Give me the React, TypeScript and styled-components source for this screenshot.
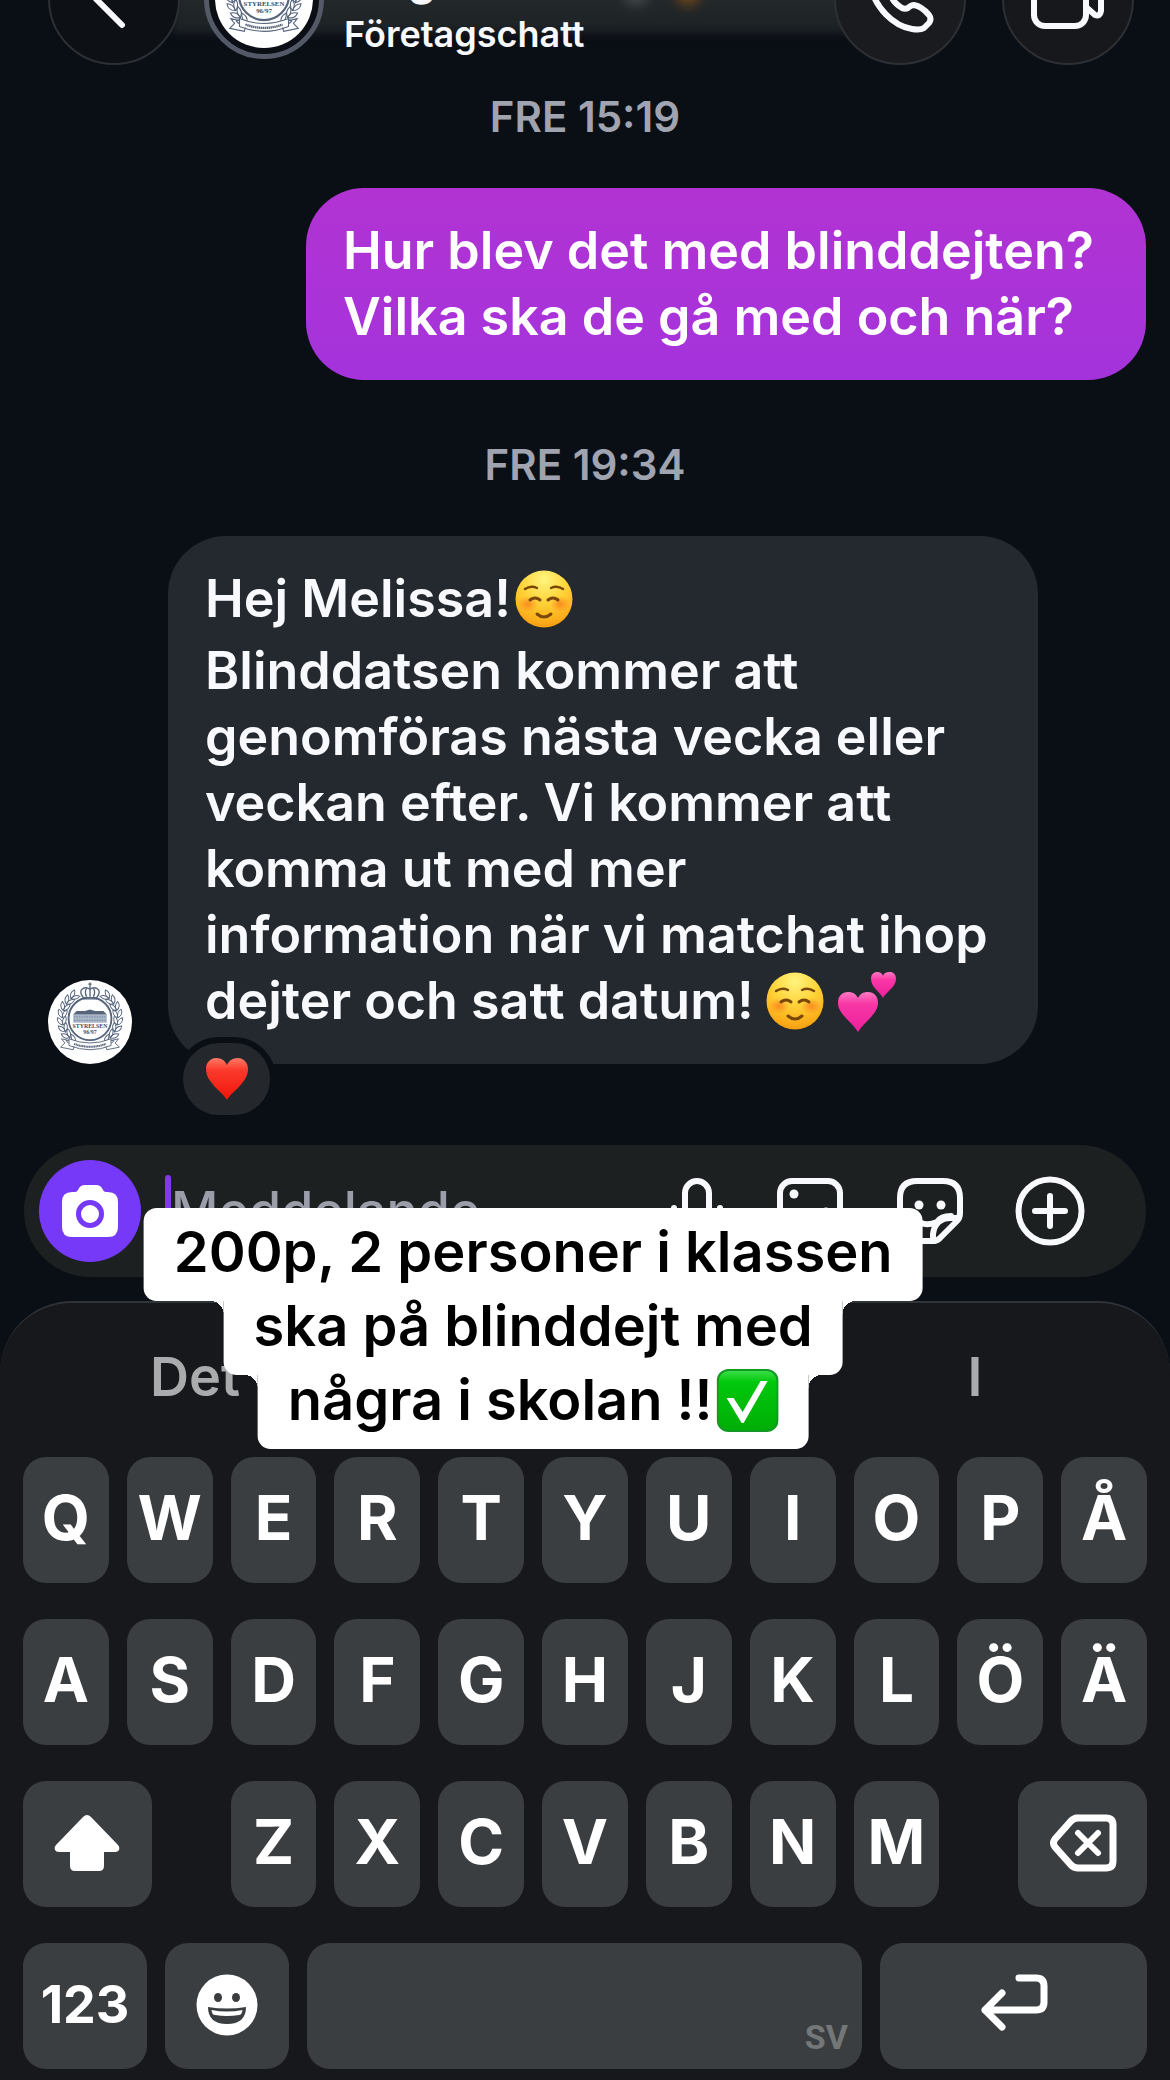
import React from "react";
import styled, { createGlobalStyle, css } from "styled-components";

const INK = "#56647c";

const GlobalStyle = createGlobalStyle`
  * { box-sizing: border-box; }
  html { background: #17181c; }
  body {
    margin: 0;
    font-family: Inter, "Liberation Sans", sans-serif;
    color: #f7f9fc;
    background: #0a0e15;
  }
  button {
    border: 0;
    padding: 0;
    margin: 0;
    font: inherit;
    color: inherit;
    background: none;
    cursor: pointer;
  }
  svg { display: block; }
`;

const Screen = styled.div`
  overflow: hidden;
  background: #0a0e15;
`;

const Header = styled.header`
  position: relative;
  display: flex;
  align-items: center;
  height: 132px;
  margin-top: -67px;
  padding: 0 36px 0 48px;

  &::before {
    content: "";
    position: absolute;
    left: 172px;
    right: 300px;
    top: 40px;
    height: 60px;
    background:
      radial-gradient(circle at 516px 20px, #7a4a14 4px, transparent 18px),
      radial-gradient(circle at 464px 20px, #4a4f52 4px, transparent 18px),
      linear-gradient(#262b2e, #1d2225);
    filter: blur(5px);
  }
`;

const RoundButton = styled.button<{ $tone: string }>`
  position: relative;
  flex: none;
  display: grid;
  place-items: center;
  width: 132px;
  height: 132px;
  border-radius: 50%;
  border: 2px solid #2c3035;
  background: ${(p) => p.$tone};
`;

const HeaderActions = styled.div`
  display: flex;
  gap: 36px;
`;

const HeaderAvatar = styled.div`
  position: relative;
  flex: none;
  width: 120px;
  height: 120px;
  margin: 0 20px 0 24px;
  padding: 6px;
  border: 5px solid #535966;
  border-radius: 50%;
  background: #0b0e14;
`;

const Titles = styled.div`
  position: relative;
  flex: 1;
  align-self: flex-end;
  padding-bottom: 10px;
`;

const Title = styled.h1`
  margin: 0 0 8px;
  padding-left: 64px;
  font-size: 44px;
  line-height: 52px;
  font-weight: 700;
`;

const Subtitle = styled.p`
  margin: 0;
  font-size: 36px;
  line-height: 42px;
  font-weight: 600;
`;

const Thread = styled.main`
  display: flex;
  flex-direction: column;
  padding: 28px 24px 81px 48px;
`;

const Stamp = styled.time<{ $spaced?: boolean }>`
  align-self: center;
  margin: ${(p) => (p.$spaced ? "61px" : "0")} 24px 47px 0;
  font-size: 42px;
  line-height: 48px;
  font-weight: 600;
  color: #a0a4b0;
`;

const Bubble = styled.div<{ $mine?: boolean }>`
  position: relative;
  padding: 30px 37px;
  border-radius: 58px;
  font-size: 52px;
  line-height: 66px;
  font-weight: 600;
  white-space: pre-line;
  ${(p) =>
    p.$mine
      ? css`
          align-self: flex-end;
          padding-right: 52px;
          color: #fff;
          background: linear-gradient(#b233d2, #a433dc);
        `
      : css`
          flex: 0 0 870px;
          background: #24282f;
        `}
`;

const Greeting = styled.div`
  display: flex;
  align-items: center;
  gap: 4px;
  height: 72px;
  padding-bottom: 6px;
`;

const Closing = styled.div`
  display: flex;
  align-items: center;
  gap: 12px;
`;

const Incoming = styled.div`
  display: flex;
  align-items: flex-end;
  gap: 36px;
`;

const SmallAvatar = styled.div`
  flex: none;
  width: 84px;
  height: 84px;
`;

const Reaction = styled.button`
  position: absolute;
  left: 9px;
  bottom: -57px;
  display: grid;
  place-items: center;
  width: 99px;
  height: 84px;
  border: 6px solid #0a0e15;
  border-radius: 42px;
  background: #24282c;
`;

const Dock = styled.div`
  position: relative;
`;

const Composer = styled.form`
  display: flex;
  align-items: center;
  height: 132px;
  margin: 0 24px 24px;
  padding: 0 61px 0 15px;
  border-radius: 66px;
  background: #1d2021;
`;

const CameraButton = styled.button`
  flex: none;
  display: grid;
  place-items: center;
  width: 102px;
  height: 102px;
  border-radius: 50%;
  background: #7639f8;
`;

const Field = styled.label`
  flex: 1;
  min-width: 0;
  display: flex;
  align-items: center;
  padding-left: 24px;
`;

const Caret = styled.span`
  flex: none;
  width: 6px;
  height: 72px;
  border-radius: 3px;
  background: #8338ec;
`;

const MessageInput = styled.input`
  flex: 1;
  min-width: 0;
  padding: 0;
  border: 0;
  outline: 0;
  background: none;
  font: inherit;
  font-size: 52px;
  font-weight: 500;
  line-height: 66px;
  color: #f7f9fc;
  &::placeholder {
    color: #9b9da9;
    opacity: 1;
  }
`;

const Tools = styled.div`
  flex: none;
  display: flex;
  align-items: center;
  gap: 50px;
`;

const Caption = styled.div`
  position: absolute;
  top: 63px;
  left: 46%;
  transform: translateX(-50%);
  width: max-content;
  margin-left: -5px;
  display: flex;
  flex-direction: column;
  align-items: center;
  color: #000;
  font-size: 56px;
  line-height: 74px;
  font-weight: 600;
`;

const CaptionLine = styled.div`
  position: relative;
  display: flex;
  align-items: center;
  gap: 4px;
  padding: 7px 30px 12px;
  border-radius: 13px;
  background: #fff;

  & + & {
    margin-top: -19px;
  }
  & + &::before,
  & + &::after {
    content: "";
    position: absolute;
    top: 19px;
    width: 13px;
    height: 13px;
  }
  & + &::before {
    right: 100%;
    background: radial-gradient(circle at 0 100%, transparent 13px, #fff 13px);
  }
  & + &::after {
    left: 100%;
    background: radial-gradient(circle at 100% 100%, transparent 13px, #fff 13px);
  }
`;

const CaptionText = styled.span`
  position: relative;
  z-index: 1;
`;

const Keyboard = styled.section`
  padding: 0 23px 11px;
  border-top: 2px solid #303338;
  border-radius: 72px 72px 0 0;
  background: #17181c;
`;

const Suggestions = styled.div`
  display: grid;
  grid-template-columns: repeat(3, 1fr);
  height: 154px;
  margin: 0 -23px;
  padding-bottom: 8px;
`;

const Suggestion = styled.button`
  font-size: 54px;
  font-weight: 600;
  color: #a9abad;
`;

const Rows = styled.div`
  display: grid;
  gap: 36px;
`;

const Row = styled.div<{ $columns?: string }>`
  display: grid;
  grid-template-columns: ${(p) => p.$columns ?? "repeat(11, minmax(0, 1fr))"};
  gap: 18px;
`;

const Key = styled.button<{ $edge?: "start" | "end" }>`
  display: flex;
  align-items: center;
  justify-content: center;
  height: 126px;
  padding-bottom: 6px;
  border-radius: 23px;
  background: #3b3e40;
  color: #fff;
  font-size: 62px;
  font-weight: 700;
  ${(p) =>
    p.$edge &&
    css`
      grid-column: span 2;
      width: 68%;
      justify-self: ${p.$edge};
    `}
`;

const IconKey = styled(Key)`
  padding-bottom: 2px;
`;

const NumbersKey = styled(Key)`
  padding-bottom: 4px;
  font-size: 52px;
`;

const SpaceKey = styled(Key)`
  align-items: flex-end;
  justify-content: flex-end;
  padding: 0 14px 10px;
  font-family: Roboto, sans-serif;
  font-size: 34px;
  line-height: 44px;
  font-weight: 700;
  color: #747778;
`;

function Emblem() {
  const leaves = Array.from({ length: 8 }, (_, i) => {
    const deg = 130 + i * 15;
    const a = (deg * Math.PI) / 180;
    return { x: 50 + 33 * Math.cos(a), y: 46 - 33 * Math.sin(a), r: 180 - deg };
  });
  const branch = leaves.map((l, i) => (
    <g key={i} transform={`translate(${l.x} ${l.y}) rotate(${l.r})`}>
      <path d="M0 2Q-7-1-5-8Q1-5 0 2Z" />
      <path d="M0 2Q6-1 5-8Q-1-5 0 2Z" />
    </g>
  ));
  return (
    <svg viewBox="0 0 100 100" width="100%" height="100%" role="img" aria-label="Styrelsen 96/97">
      <circle cx="50" cy="50" r="50" fill="#fff" />
      <g fill="none" stroke={INK} strokeWidth="1.1">
        <g>{branch}</g>
        <g transform="translate(100 0) scale(-1 1)">{branch}</g>
        <circle cx="50" cy="46" r="25.500" fill="#fff" strokeWidth="2.2" />
        <path d="M42 21Q36 13 42 10Q46 8 50 11Q54 8 58 10Q64 13 58 21Z" fill="#fff" strokeWidth="1.6" />
        <path d="M46 20Q43 14 46 10M50 20V10M54 20Q57 14 54 10M41 22.500H59M50 3V10M48 5H52" strokeWidth="1.6" />
        <path d="M25 70Q50 80 75 70V78Q50 88 25 78Z" fill="#fff" />
        <path d="M25 72L16 70L20 75L15 80L30 83L31 79M75 72L84 70L80 75L85 80L70 83L69 79" />
        <path d="M31 76Q50 83 69 76" strokeWidth="2.400" strokeDasharray="1.500 .5" />
      </g>
      <path d="M30 41H70V51H30Z" fill="#a9b6c8" />
      <path d="M30 41L34 37H44L50 35L56 37H66L70 41Z" fill={INK} />
      <path d="M31 44H69M31 48H69" stroke="#7c8ba3" strokeWidth="1.500" strokeDasharray="1.500 1.500" />
      <g fill="#3f4d66" fontFamily="Liberation Serif, serif" fontWeight="700" textAnchor="middle">
        <text x="50" y="57" fontSize="7">STYRELSEN</text>
        <text x="50" y="64" fontSize="7">96/97</text>
      </g>
    </svg>
  );
}

function SmileEmoji() {
  return (
    <svg width="58" height="58" viewBox="0 0 58 58" role="img" aria-label="☺️">
      <defs>
        <radialGradient id="face" cx=".5" cy=".15" r=".9">
          <stop offset="0" stopColor="#fff47e" />
          <stop offset=".45" stopColor="#ffd43a" />
          <stop offset=".85" stopColor="#fbaa17" />
          <stop offset="1" stopColor="#ee9410" />
        </radialGradient>
        <radialGradient id="blush">
          <stop offset="0" stopColor="#f8741c" stopOpacity=".7" />
          <stop offset="1" stopColor="#f8741c" stopOpacity="0" />
        </radialGradient>
      </defs>
      <circle cx="29" cy="29" r="28.500" fill="url(#face)" />
      <ellipse cx="13" cy="34" rx="10" ry="8" fill="url(#blush)" />
      <ellipse cx="45" cy="34" rx="10" ry="8" fill="url(#blush)" />
      <g fill="none" stroke="#7a4708" strokeWidth="2.500" strokeLinecap="round">
        <path d="M10 19Q16 15 22 18M36 18Q42 15 48 19" />
        <path d="M15 30Q20 26 25 30M33 30Q38 26 43 30" strokeWidth="3" />
        <path d="M22 44Q29 50 36 44" strokeWidth="3" />
      </g>
    </svg>
  );
}

function TwoHeartsEmoji() {
  return (
    <svg width="60" height="62" viewBox="0 0 60 62" role="img" aria-label="💕">
      <defs>
        <linearGradient id="pink" x1="0" y1="0" x2="0" y2="1">
          <stop offset="0" stopColor="#ff7ac4" />
          <stop offset=".3" stopColor="#f837a6" />
          <stop offset="1" stopColor="#ee1f9c" />
        </linearGradient>
      </defs>
      <path d="M22 62C16 52 2 44 2 33C2 26 6 22 12 22C17 22 20 24 22 28C24 24 27 22 32 22C38 22 42 26 42 33C42 44 28 52 22 62Z" fill="url(#pink)" />
      <path d="M47 28C44 22 35 17 35 9C35 4 38 2 41 2C44 2 46 3 47 6C48 3 50 2 54 2C57 2 60 4 60 9C60 17 50 22 47 28Z" fill="url(#pink)" />
    </svg>
  );
}

function HeartEmoji() {
  return (
    <svg width="44" height="44" viewBox="0 0 44 44" role="img" aria-label="❤️">
      <defs>
        <linearGradient id="red" x1="0" y1="0" x2="0" y2="1">
          <stop offset="0" stopColor="#ff7a66" />
          <stop offset=".28" stopColor="#fb3b2d" />
          <stop offset="1" stopColor="#f01408" />
        </linearGradient>
      </defs>
      <path d="M22 43C17 34 1 26 1 12C1 5 6 1 11 1C17 1 20 4 22 8C24 4 27 1 33 1C38 1 43 5 43 12C43 26 27 34 22 43Z" fill="url(#red)" />
    </svg>
  );
}

function CheckEmoji() {
  return (
    <svg width="62" height="63" viewBox="0 0 62 63" role="img" aria-label="✅">
      <defs>
        <linearGradient id="green" x1="0" y1="0" x2="0" y2="1">
          <stop offset="0" stopColor="#3fe04a" />
          <stop offset=".2" stopColor="#00c80c" />
          <stop offset="1" stopColor="#00ad06" />
        </linearGradient>
      </defs>
      <rect x="1" y="1" width="60" height="61" rx="11" fill="url(#green)" stroke="#129a25" strokeWidth="2" />
      <path d="M10 29H17L26 43L44 12H51L27 54H25Z" fill="#fff" />
    </svg>
  );
}

const stroke = {
  fill: "none",
  stroke: "currentColor",
  strokeWidth: 6,
  strokeLinecap: "round" as const,
  strokeLinejoin: "round" as const,
};

const BackIcon = () => (
  <svg width="72" height="72" viewBox="0 0 72 72" {...stroke}>
    <path d="M44 10L18 36L44 62" />
  </svg>
);

const PhoneIcon = () => (
  <svg width="72" height="72" viewBox="0 0 72 72" {...stroke}>
    <path d="M14 6C7 9 5 15 7 24C11 44 29 63 48 66C54 67 57 67 60 65L65 60Q68 56 65 52C60 46 56 43 50 42C48 42 46 43 44 45C42 46 40 46 38 45C33 42 29 38 27 33C26 31 27 29 28 28C30 26 31 24 30 22C29 16 26 11 21 7Q18 4 14 6Z" />
  </svg>
);

const VideoIcon = () => (
  <svg width="78" height="72" viewBox="0 0 78 72" {...stroke}>
    <rect x="5" y="10" width="52" height="53" rx="11" />
    <path d="M57 31L65 22Q72 17 72 24V48Q71 54 66 52L57 44" />
  </svg>
);

const CameraIcon = () => (
  <svg width="56" height="54" viewBox="0 0 56 54">
    <path d="M10 8H13Q15 8 16 6Q18 1 23 1H34Q39 1 41 6Q42 8 44 8H46Q56 8 56 18V43Q56 53 46 53H10Q0 53 0 43V18Q0 8 10 8Z" fill="#fff" />
    <circle cx="28" cy="30" r="11.500" fill="#fff" stroke="#7639f8" strokeWidth="5" />
  </svg>
);

const MicIcon = () => (
  <svg width="56" height="70" viewBox="0 0 56 70" {...stroke}>
    <rect x="16" y="5" width="24" height="40" rx="12" />
    <path d="M5 32C5 63 51 63 51 32M28 56V66" />
  </svg>
);

const GalleryIcon = () => (
  <svg width="70" height="70" viewBox="0 0 70 70" {...stroke}>
    <rect x="5" y="5" width="60" height="60" rx="12" />
    <circle cx="19" cy="18" r="4.500" fill="currentColor" stroke="none" />
    <path d="M6 54L22 42L36 54L47 37Q51 32 55 37L65 48" />
  </svg>
);

const StickerIcon = () => (
  <svg width="70" height="70" viewBox="0 0 70 70" {...stroke}>
    <path d="M40 65H22Q5 65 5 48V22Q5 5 22 5H48Q65 5 65 22V37Q65 42 62 45L46 61Q43 65 38 65V58Q40 42 56 42H63" />
    <path d="M20 42Q28 52 42 46Q46 40 56 40" />
    <circle cx="24" cy="29" r="4.500" fill="currentColor" stroke="none" />
    <circle cx="46" cy="29" r="4.500" fill="currentColor" stroke="none" />
  </svg>
);

const PlusIcon = () => (
  <svg width="70" height="70" viewBox="0 0 70 70" {...stroke}>
    <circle cx="35" cy="35" r="31.500" />
    <path d="M35 20V50M20 35H50" />
  </svg>
);

const ShiftIcon = () => (
  <svg width="66" height="58" viewBox="0 0 66 58" fill="#fff">
    <path d="M29 3Q33-1 37 3L64 31Q66 33 65 36Q64 38 61 38H50V52Q50 57 45 57H21Q16 57 16 52V38H5Q2 38 1 36Q0 33 2 31Z" />
  </svg>
);

const BackspaceIcon = () => (
  <svg width="68" height="58" viewBox="0 0 68 58" {...stroke} strokeWidth={7}>
    <path d="M27 4H57Q64 4 64 11V47Q64 54 57 54H29Q25 54 22 51L6 33Q3 29 6 25L22 7Q25 4 29 4Z" />
    <path d="M29 19L49 39M49 19L29 39" strokeWidth={6} />
  </svg>
);

const ReturnIcon = () => (
  <svg width="68" height="64" viewBox="0 0 68 64" {...stroke} strokeWidth={7}>
    <path d="M39 5H56Q64 5 64 13V29Q64 37 56 37H5M22 20L5 37L22 54" />
  </svg>
);

const GrinIcon = () => (
  <svg width="62" height="62" viewBox="0 0 62 62">
    <circle cx="31" cy="31" r="30.500" fill="#fff" />
    <g fill="#3b3e40">
      <ellipse cx="22" cy="23.500" rx="4" ry="4.500" />
      <ellipse cx="40" cy="23.500" rx="4" ry="4.500" />
      <path d="M12 33Q31 36 50 33Q50 50 31 50Q12 50 12 33Z" />
    </g>
    <path d="M15.500 36Q31 39 46.500 36Q46 41 43 41Q31 43 19 41Q16 41 15.500 36Z" fill="#fff" />
  </svg>
);

const Letters = ({ keys }: { keys: string }) => (
  <>
    {keys.split("").map((k) => (
      <Key key={k} type="button">
        {k}
      </Key>
    ))}
  </>
);

export default function App() {
  return (
    <Screen>
      <GlobalStyle />
      <Header>
        <RoundButton $tone="#0d1015" type="button" aria-label="Tillbaka">
          <BackIcon />
        </RoundButton>
        <HeaderAvatar>
          <Emblem />
        </HeaderAvatar>
        <Titles>
          <Title>g</Title>
          <Subtitle>Företagschatt</Subtitle>
        </Titles>
        <HeaderActions>
          <RoundButton $tone="#1a1b1f" type="button" aria-label="Ring">
            <PhoneIcon />
          </RoundButton>
          <RoundButton $tone="#17181b" type="button" aria-label="Videosamtal">
            <VideoIcon />
          </RoundButton>
        </HeaderActions>
      </Header>

      <Thread>
        <Stamp>FRE 15:19</Stamp>
        <Bubble $mine>{"Hur blev det med blinddejten?\nVilka ska de gå med och när?"}</Bubble>
        <Stamp $spaced>FRE 19:34</Stamp>
        <Incoming>
          <SmallAvatar>
            <Emblem />
          </SmallAvatar>
          <Bubble>
            <Greeting>
              <span>Hej Melissa!</span>
              <SmileEmoji />
            </Greeting>
            {"Blinddatsen kommer att\ngenomföras nästa vecka eller\nveckan efter. Vi kommer att\nkomma ut med mer\ninformation när vi matchat ihop"}
            <Closing>
              <span>dejter och satt datum!</span>
              <SmileEmoji />
              <TwoHeartsEmoji />
            </Closing>
            <Reaction type="button" aria-label="Reaktion">
              <HeartEmoji />
            </Reaction>
          </Bubble>
        </Incoming>
      </Thread>

      <Dock>
        <Composer>
          <CameraButton type="button" aria-label="Kamera">
            <CameraIcon />
          </CameraButton>
          <Field>
            <Caret />
            <MessageInput aria-label="Meddelande" placeholder="Meddelande" />
          </Field>
          <Tools>
            <button type="button" aria-label="Röstmeddelande"><MicIcon /></button>
            <button type="button" aria-label="Galleri"><GalleryIcon /></button>
            <button type="button" aria-label="Klistermärken"><StickerIcon /></button>
            <button type="button" aria-label="Mer"><PlusIcon /></button>
          </Tools>
        </Composer>

        <Keyboard>
          <Suggestions>
            <Suggestion type="button">Det</Suggestion>
            <span />
            <Suggestion type="button">I</Suggestion>
          </Suggestions>
          <Rows>
            <Row><Letters keys="QWERTYUIOPÅ" /></Row>
            <Row><Letters keys="ASDFGHJKLÖÄ" /></Row>
            <Row>
              <IconKey $edge="start" type="button" aria-label="Skift"><ShiftIcon /></IconKey>
              <Letters keys="ZXCVBNM" />
              <IconKey $edge="end" type="button" aria-label="Radera"><BackspaceIcon /></IconKey>
            </Row>
            <Row $columns="124fr 124fr 555fr 267fr">
              <NumbersKey type="button">123</NumbersKey>
              <IconKey type="button" aria-label="Emoji"><GrinIcon /></IconKey>
              <SpaceKey type="button">SV</SpaceKey>
              <IconKey type="button" aria-label="Retur"><ReturnIcon /></IconKey>
            </Row>
          </Rows>
        </Keyboard>

        <Caption>
          <CaptionLine>
            <CaptionText>200p, 2 personer i klassen</CaptionText>
          </CaptionLine>
          <CaptionLine>
            <CaptionText>ska på blinddejt med</CaptionText>
          </CaptionLine>
          <CaptionLine>
            <CaptionText>några i skolan !!</CaptionText>
            <CheckEmoji />
          </CaptionLine>
        </Caption>
      </Dock>
    </Screen>
  );
}
